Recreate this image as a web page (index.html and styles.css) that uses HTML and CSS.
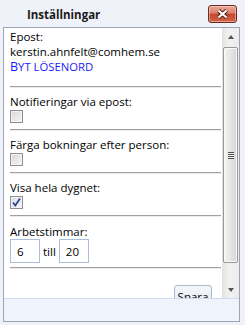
FILE: index.html
```html
<!DOCTYPE html>
<html lang="sv">
<head>
    <meta charset="UTF-8">
    <meta name="viewport" content="width=device-width, initial-scale=1.0">
    <title>Inställningar</title>
    <link rel="stylesheet" href="styles.css">
</head>
<body>
<div class="window">
    <div class="titlebar">
        <span class="title">Inställningar</span>
        <button class="close" aria-label="Stäng">
            <svg width="13" height="10" viewBox="0 0 13 10">
                <path d="M2.5 1.5 L10.5 8.5 M10.5 1.5 L2.5 8.5" stroke="#4a1a12" stroke-width="4"/>
                <path d="M2.5 1.5 L10.5 8.5 M10.5 1.5 L2.5 8.5" stroke="#fff" stroke-width="2.2"/>
            </svg>
        </button>
    </div>

    <div class="frame">
        <div class="panel">
            <div class="content">
                <div class="section top">
                    <div>Epost:</div>
                    <div>kerstin.ahnfelt@comhem.se</div>
                    <a class="link" href="#">Byt lösenord</a>
                </div>
                <hr>
                <div class="section">
                    <div>Notifieringar via epost:</div>
                    <span class="check"></span>
                </div>
                <hr>
                <div class="section">
                    <div>Färga bokningar efter person:</div>
                    <span class="check"></span>
                </div>
                <hr>
                <div class="section">
                    <div>Visa hela dygnet:</div>
                    <span class="check checked">
                        <svg width="11" height="11" viewBox="0 0 11 11">
                            <path d="M2 5.5 L4.3 8.5 L9 1.5" fill="none" stroke="#32468a" stroke-width="1.8"/>
                        </svg>
                    </span>
                </div>
                <hr>
                <div class="section hours">
                    <div>Arbetstimmar:</div>
                    <div class="hours-row">
                        <input class="hour" type="text" value="6">
                        <span class="till">till</span>
                        <input class="hour" type="text" value="20">
                    </div>
                </div>
                <hr>
                <div class="actions">
                    <button class="save">Spara</button>
                </div>
            </div>

            <div class="scrollbar">
                <div class="arrow"><span class="tri up"></span></div>
                <div class="thumb"><span class="grip"></span></div>
                <div class="track"></div>
                <div class="arrow"><span class="tri down"></span></div>
            </div>
        </div>
        <div class="footer"></div>
    </div>
</div>
</body>
</html>
```

FILE: styles.css
```css
* {
    margin: 0;
    padding: 0;
    box-sizing: border-box;
}
body {
    background-color: #eff3f9;
    font-family: "Open Sans", sans-serif;
    font-size: 11.5px;
    line-height: 15px;
    color: #000;
}
.window {
    width: 245px;
    height: 325px;
    display: flex;
    flex-direction: column;
}

/* title bar */
.titlebar {
    height: 27px;
    display: flex;
    align-items: center;
    justify-content: space-between;
    padding: 0 8px 0 27px;
}
.title {
    font-weight: bold;
    color: #1b1b1b;
    margin-top: 1px;
}
.close {
    width: 29px;
    height: 18px;
    margin-top: 1px;
    border: 1px solid #6f2b20;
    border-radius: 3px;
    background: linear-gradient(#e9aa9a, #d98069 45%, #c4462c 50%, #cf6448);
    box-shadow: inset 0 0 0 1px rgba(255, 220, 210, 0.5);
    display: flex;
    align-items: center;
    justify-content: center;
}

/* window body */
.frame {
    flex: 1;
    margin: 0 5px 3px 3px;
    border: 1px solid #9ba5b3;
    display: flex;
    flex-direction: column;
}
.panel {
    height: 270px;
    display: flex;
    background-color: #fff;
}
.footer {
    flex: 1;
    background-color: #eef3fc;
    border-top: 1px solid #cfdcef;
}
.content {
    flex: 1;
    overflow: hidden;
    padding: 0 1px 0 6px;
}
.section {
    padding: 6px 0 6px;
}
.section.top {
    padding: 1px 0 12px;
}
.section.hours {
    padding: 7px 0 4px;
}
hr {
    height: 0;
    border: 0;
    border-top: 1px solid #a0a0a0;
    border-bottom: 1px solid #ececec;
}
.link {
    display: block;
    color: #1a1af5;
    text-decoration: none;
    text-transform: uppercase;
    font-size: 11.3px;
}
.link::first-letter {
    font-size: 12.5px;
}

/* checkboxes */
.check {
    display: block;
    width: 13px;
    height: 13px;
    margin-top: 1px;
    border: 1px solid #8e8f8f;
    background: linear-gradient(135deg, #d6d6d6, #f7f7f7);
    box-shadow: inset 0 0 0 1px #f3f3f3;
}
.check.checked {
    background: linear-gradient(135deg, #d7deea, #f5f7fb);
}
.check svg {
    display: block;
}

/* working hours */
.hours-row {
    display: flex;
    align-items: center;
}
.hour {
    width: 30px;
    height: 24px;
    border: 1px solid #abbfdb;
    padding: 0 0 0 6px;
    font: inherit;
    outline: none;
}
.till {
    padding: 0 3px;
}

/* save */
.actions {
    display: flex;
    justify-content: flex-end;
    padding: 16px 9px 0 0;
}
.save {
    width: 38px;
    height: 23px;
    font: inherit;
    border: 1px solid #a9b8ca;
    border-radius: 3px;
    background: linear-gradient(#f4f7fb, #e4eaf2);
    color: #000;
}

/* scrollbar */
.scrollbar {
    width: 17px;
    display: flex;
    flex-direction: column;
    background: linear-gradient(to right, #e2e2e2, #f1f1f1 40%, #ececec);
}
.arrow {
    height: 17px;
    display: flex;
    align-items: center;
    justify-content: center;
}
.tri {
    width: 0;
    height: 0;
    border-left: 3.5px solid transparent;
    border-right: 3.5px solid transparent;
}
.tri.up {
    border-bottom: 4px solid #555;
}
.tri.down {
    border-top: 4px solid #555;
}
.thumb {
    height: 216px;
    margin: 2px 1px 0 1px;
    border: 1px solid #979797;
    border-radius: 2px;
    background: linear-gradient(to right, #f3f3f3, #e6e6e6 50%, #d4d4d4);
    box-shadow: inset 0 0 0 1px #fbfbfb;
    display: flex;
    align-items: center;
    justify-content: center;
}
.grip {
    width: 6px;
    height: 7px;
    background: repeating-linear-gradient(#4f4f4f 0 1px, #f4f4f4 1px 2px);
}
.track {
    flex: 1;
}
```
